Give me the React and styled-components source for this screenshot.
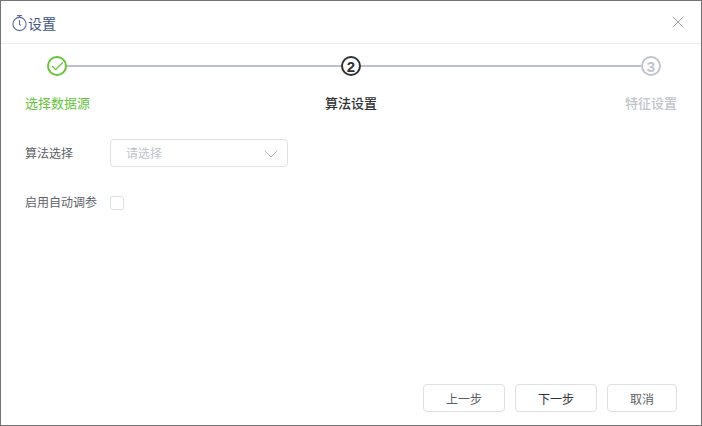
import React from "react";
import styled, { createGlobalStyle } from "styled-components";
import { ChevronDown, X, Check } from "lucide-react";

const GlobalStyle = createGlobalStyle`
  html, body {
    margin: 0;
    padding: 0;
    background: #fff;
    font-family: "Liberation Sans", "Noto Sans CJK SC", sans-serif;
  }
`;

const Dialog = styled.div`
  box-sizing: border-box;
  width: 702px;
  height: 426px;
  display: flex;
  flex-direction: column;
  background: #fff;
  border: 1px solid #747474;
`;

const Header = styled.header`
  box-sizing: border-box;
  height: 43px;
  flex: none;
  display: flex;
  align-items: center;
  justify-content: space-between;
  padding: 0 13px 0 11px;
  border-bottom: 1px solid #ebecef;
`;

const Title = styled.h1`
  margin: 0;
  padding-top: 2px;
  display: flex;
  align-items: center;
  font-size: 14px;
  font-weight: 400;
  color: #3f5488;
`;

const CloseButton = styled.button`
  border: 0;
  padding: 0;
  display: flex;
  background: none;
  color: #8d9095;
`;

const Stepper = styled.div`
  padding: 12px 40px 0 46px;
  display: grid;
  grid-template-columns: 20px 274px 20px 280px 20px;
  align-items: center;
`;

const Circle = styled.div`
  box-sizing: border-box;
  width: 20px;
  height: 20px;
  display: flex;
  align-items: center;
  justify-content: center;
  border-radius: 50%;
  border: 2px solid ${(p) => p.$color};
  color: ${(p) => p.$color};
  font-size: 15px;
  font-weight: 700;
`;

const Connector = styled.div`
  height: 2px;
  background: #bcc0c9;
`;

const StepLabels = styled.div`
  padding: 18px 24px 0;
  display: grid;
  grid-template-columns: 1fr auto 1fr;
  font-size: 13px;
  line-height: 20px;
`;

const StepLabel = styled.div`
  color: ${(p) => p.$color};
  font-weight: ${(p) => (p.$active ? 500 : 400)};
  justify-self: ${(p) => p.$align || "start"};
`;

const Form = styled.div`
  flex: 1;
  padding: 25px 24px 0;
  display: flex;
  flex-direction: column;
  gap: 28px;
`;

const Row = styled.div`
  display: flex;
  align-items: center;
`;

const Label = styled.label`
  width: 85px;
  flex: none;
  padding-top: ${(p) => p.$nudge || 0}px;
  font-size: 12px;
  line-height: 16px;
  color: #5c5f66;
`;

const Select = styled.div`
  box-sizing: border-box;
  width: 178px;
  height: 28px;
  display: flex;
  align-items: center;
  justify-content: space-between;
  padding: 1px 4px 0 15px;
  border: 1px solid #dfe1e6;
  border-radius: 4px;
  font-size: 12px;
  line-height: 16px;
  color: #c0c4cc;
`;

const Checkbox = styled.span`
  box-sizing: border-box;
  display: block;
  width: 14px;
  height: 14px;
  border: 1px solid #dcdfe6;
  border-radius: 3px;
`;

const Footer = styled.footer`
  display: flex;
  justify-content: flex-end;
  gap: 10px;
  padding: 0 24px 13px 0;
`;

const Button = styled.button`
  box-sizing: border-box;
  width: ${(p) => p.$width}px;
  height: 28px;
  padding: 0;
  background: #fff;
  border: 1px solid #dcdfe3;
  border-radius: 4px;
  font-family: inherit;
  font-size: 12px;
  color: ${(p) => p.$color || "#5c5f66"};
`;

const TimerIcon = () => (
  <svg width="16" height="18" viewBox="0 0 16 18" fill="none" stroke="#5a6d9a" strokeWidth="1.1">
    <circle cx="7.5" cy="10" r="6.6" />
    <path d="M5.1 1.6h4.8M7.5 1.6v1.8M7.5 6v4.4l1.6 1" />
  </svg>
);

export default function App() {
  return (
    <>
      <GlobalStyle />
      <Dialog>
        <Header>
          <Title>
            <TimerIcon />
            设置
          </Title>
          <CloseButton>
            <X size={20} strokeWidth={1} />
          </CloseButton>
        </Header>
        <Stepper>
          <Circle $color="#67c23a">
            <Check size={15} strokeWidth={2} />
          </Circle>
          <Connector />
          <Circle $color="#303133">2</Circle>
          <Connector />
          <Circle $color="#c0c4cc">3</Circle>
        </Stepper>
        <StepLabels>
          <StepLabel $color="#67c23a">选择数据源</StepLabel>
          <StepLabel $color="#303133" $active $align="center">
            算法设置
          </StepLabel>
          <StepLabel $color="#c0c4cc" $active $align="end">
            特征设置
          </StepLabel>
        </StepLabels>
        <Form>
          <Row>
            <Label $nudge={2}>算法选择</Label>
            <Select>
              请选择
              <ChevronDown size={24} strokeWidth={1} color="#b4b8c0" />
            </Select>
          </Row>
          <Row>
            <Label>启用自动调参</Label>
            <Checkbox />
          </Row>
        </Form>
        <Footer>
          <Button $width={82}>上一步</Button>
          <Button $width={82} $color="#303133">
            下一步
          </Button>
          <Button $width={70}>取消</Button>
        </Footer>
      </Dialog>
    </>
  );
}
